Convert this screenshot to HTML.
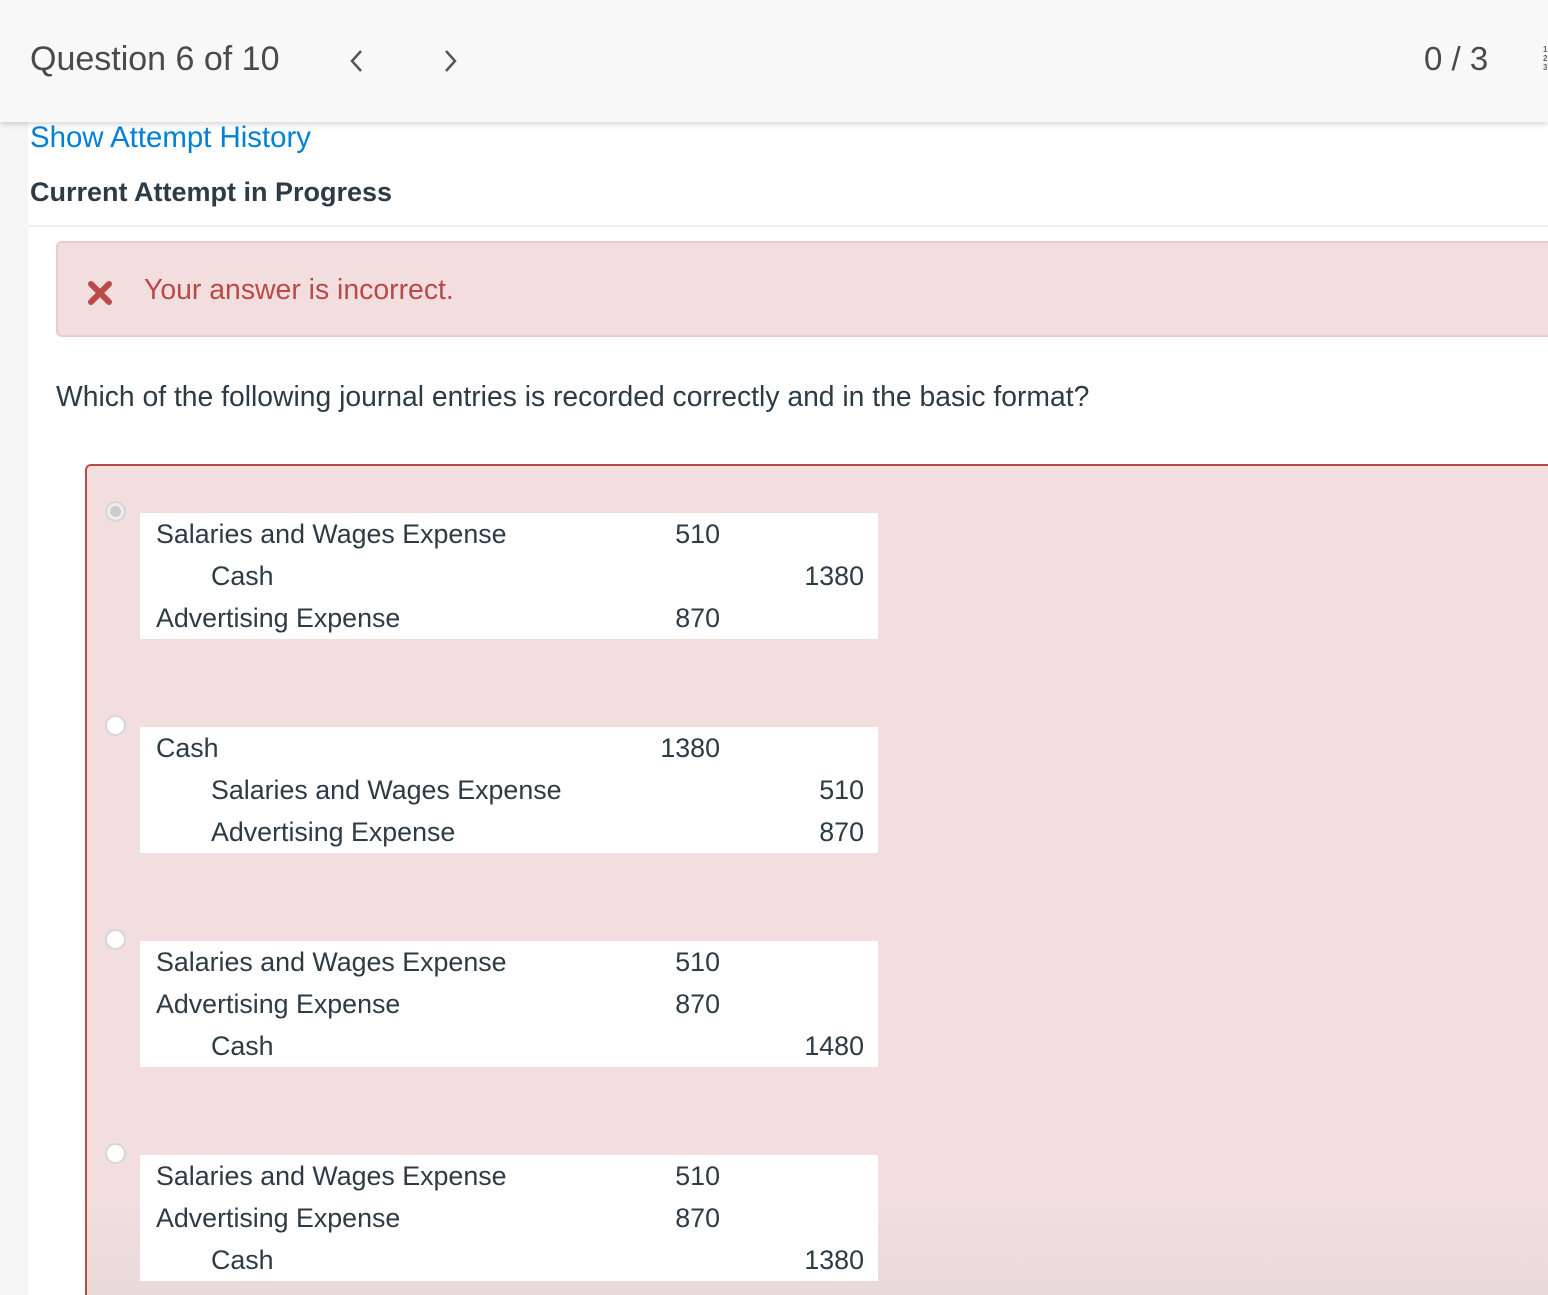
<!DOCTYPE html>
<html><head><meta charset="utf-8"><style>
*{margin:0;padding:0;box-sizing:border-box}
html,body{width:1548px;height:1295px;overflow:hidden;background:#fff;font-family:"Liberation Sans",sans-serif;color:#2d3b45;position:relative}
.strip{position:absolute;left:0;top:0;width:28px;height:1295px;background:#f5f5f5}
.hdr{position:absolute;left:0;top:0;width:1548px;height:122px;background:#f8f8f8;box-shadow:0 2px 6px rgba(0,0,0,.18);z-index:2}
.t{position:absolute;white-space:nowrap}
.box{position:absolute;left:85px;top:464px;width:1480px;height:831px;border:2px solid #b94a48;border-bottom:none;border-radius:6px 6px 0 0;background:linear-gradient(#f2dede 88%,#e9dada)}
.radio{position:absolute;left:105px;width:21px;height:21px;border-radius:50%;border:2px solid #d6d6d6;background:#fff}
.tbl{position:absolute;left:140px;width:738px;height:126px;background:#fff;font-size:26.8px}
.tbl div{position:absolute;white-space:nowrap;line-height:42px}
</style></head><body>
<div class="strip"></div>
<div class="hdr">
<div class="t" style="left:30px;top:40px;font-size:34px;color:#4a4a4a">Question 6 of 10</div>
<svg style="position:absolute;left:347px;top:48px" width="18" height="26"><path d="M14 3 L5 13 L14 23" stroke="#555" stroke-width="2.5" fill="none"/></svg>
<svg style="position:absolute;left:442px;top:48px" width="18" height="26"><path d="M4 3 L13 13 L4 23" stroke="#555" stroke-width="2.5" fill="none"/></svg>
<div class="t" style="left:1424px;top:40px;font-size:33px;color:#4a4a4a">0 / 3</div>
<div class="t" style="left:1543px;top:45px;font-size:8px;line-height:9px;font-weight:bold;color:#666">1<br>2<br>3</div>
</div>
<div class="t" style="left:30px;top:121px;font-size:29.4px;color:#0081d6">Show Attempt History</div>
<div class="t" style="left:30px;top:177px;font-size:27px;font-weight:bold;color:#2d3b45">Current Attempt in Progress</div>
<div style="position:absolute;left:28px;top:225px;width:1520px;height:2px;background:#eee"></div>
<div style="position:absolute;left:56px;top:241px;width:1520px;height:96px;background:#f2dede;border:2px solid #ebcccc;border-radius:6px"></div>
<svg style="position:absolute;left:86px;top:279px" width="28" height="28"><path d="M5 5 L23 23 M23 5 L5 23" stroke="#b94a48" stroke-width="6" stroke-linecap="round"/></svg>
<div class="t" style="left:144px;top:274px;font-size:28.4px;color:#b94a48">Your answer is incorrect.</div>
<div class="t" style="left:56px;top:380px;font-size:28.3px">Which of the following journal entries is recorded correctly and in the basic format?</div>
<div class="box"></div>
<div class="radio" style="top:501px;background:#ccc;box-shadow:inset 0 0 0 3px #eee"></div>
<div class="radio" style="top:715px"></div>
<div class="radio" style="top:929px"></div>
<div class="radio" style="top:1143px"></div>

<div class="tbl" style="top:513px">
<div style="left:16px;top:0">Salaries and Wages Expense</div><div style="right:158px;top:0">510</div>
<div style="left:71px;top:42px">Cash</div><div style="right:14px;top:42px">1380</div>
<div style="left:16px;top:84px">Advertising Expense</div><div style="right:158px;top:84px">870</div>
</div>
<div class="tbl" style="top:727px">
<div style="left:16px;top:0">Cash</div><div style="right:158px;top:0">1380</div>
<div style="left:71px;top:42px">Salaries and Wages Expense</div><div style="right:14px;top:42px">510</div>
<div style="left:71px;top:84px">Advertising Expense</div><div style="right:14px;top:84px">870</div>
</div>
<div class="tbl" style="top:941px">
<div style="left:16px;top:0">Salaries and Wages Expense</div><div style="right:158px;top:0">510</div>
<div style="left:16px;top:42px">Advertising Expense</div><div style="right:158px;top:42px">870</div>
<div style="left:71px;top:84px">Cash</div><div style="right:14px;top:84px">1480</div>
</div>
<div class="tbl" style="top:1155px">
<div style="left:16px;top:0">Salaries and Wages Expense</div><div style="right:158px;top:0">510</div>
<div style="left:16px;top:42px">Advertising Expense</div><div style="right:158px;top:42px">870</div>
<div style="left:71px;top:84px">Cash</div><div style="right:14px;top:84px">1380</div>
</div>
</body></html>
